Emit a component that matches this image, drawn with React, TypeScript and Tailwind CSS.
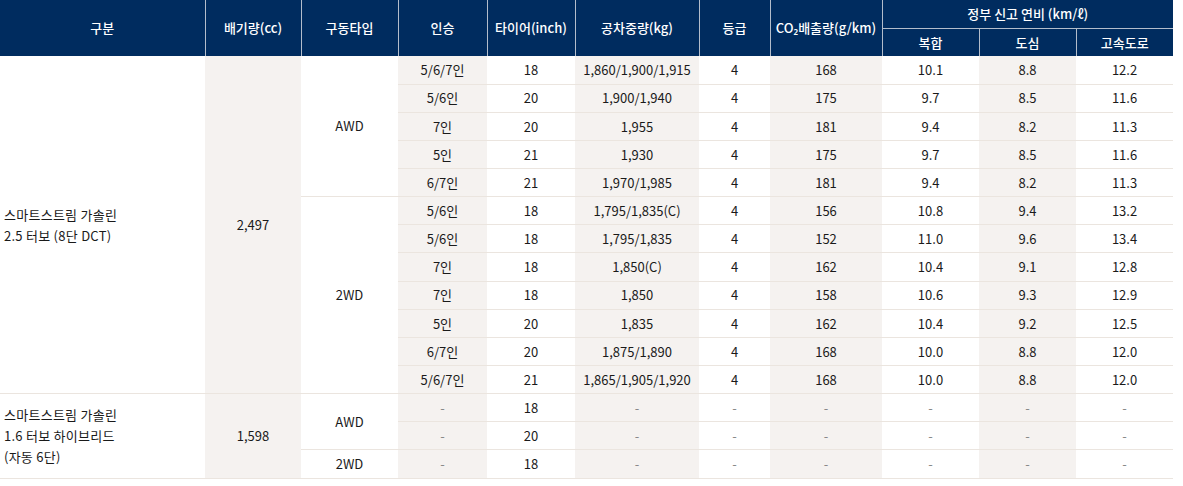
import React from 'react';

interface SpecRow {
  seat: string;
  tire: string;
  weight: string;
  grade: string;
  co2: string;
  comb: string;
  city: string;
  hwy: string;
}

interface DriveGroup {
  type: string;
  rows: SpecRow[];
}

interface EngineGroup {
  name: string[];
  cc: string;
  drives: DriveGroup[];
}

const r = (seat: string, tire: string, weight: string, grade: string, co2: string, comb: string, city: string, hwy: string): SpecRow => ({
  seat, tire, weight, grade, co2, comb, city, hwy,
});

const dash = (tire: string) => r('-', tire, '-', '-', '-', '-', '-', '-');

const groups: EngineGroup[] = [
  {
    name: ['스마트스트림 가솔린', '2.5 터보 (8단 DCT)'],
    cc: '2,497',
    drives: [
      {
        type: 'AWD',
        rows: [
          r('5/6/7인', '18', '1,860/1,900/1,915', '4', '168', '10.1', '8.8', '12.2'),
          r('5/6인', '20', '1,900/1,940', '4', '175', '9.7', '8.5', '11.6'),
          r('7인', '20', '1,955', '4', '181', '9.4', '8.2', '11.3'),
          r('5인', '21', '1,930', '4', '175', '9.7', '8.5', '11.6'),
          r('6/7인', '21', '1,970/1,985', '4', '181', '9.4', '8.2', '11.3'),
        ],
      },
      {
        type: '2WD',
        rows: [
          r('5/6인', '18', '1,795/1,835(C)', '4', '156', '10.8', '9.4', '13.2'),
          r('5/6인', '18', '1,795/1,835', '4', '152', '11.0', '9.6', '13.4'),
          r('7인', '18', '1,850(C)', '4', '162', '10.4', '9.1', '12.8'),
          r('7인', '18', '1,850', '4', '158', '10.6', '9.3', '12.9'),
          r('5인', '20', '1,835', '4', '162', '10.4', '9.2', '12.5'),
          r('6/7인', '20', '1,875/1,890', '4', '168', '10.0', '8.8', '12.0'),
          r('5/6/7인', '21', '1,865/1,905/1,920', '4', '168', '10.0', '8.8', '12.0'),
        ],
      },
    ],
  },
  {
    name: ['스마트스트림 가솔린', '1.6 터보 하이브리드', '(자동 6단)'],
    cc: '1,598',
    drives: [
      { type: 'AWD', rows: [dash('18'), dash('20')] },
      { type: '2WD', rows: [dash('18')] },
    ],
  },
];

const shade = 'bg-[#f5f2f0]';
const th = 'border-x border-[#b3bdcb] font-medium text-white text-[13px] text-center align-middle';
const td = 'border-b border-[#ebe5df] text-center align-middle text-[13px]';

const Cell: React.FC<{ value: string; shaded?: boolean }> = ({ value, shaded }) => (
  <td className={`${td} ${shaded ? shade : ''} ${value === '-' ? 'text-[#888]' : 'text-[#1a1a1a]'}`}>{value}</td>
);

export default function App() {
  return (
    <div className="w-[1183px] bg-white" style={{ fontFamily: '"Noto Sans CJK KR", "Noto Sans", sans-serif' }}>
      <table className="w-[1173px] table-fixed border-collapse">
        <colgroup>
          <col className="w-[205px]" />
          <col className="w-[96px]" />
          <col className="w-[97px]" />
          <col className="w-[89px]" />
          <col className="w-[88px]" />
          <col className="w-[124px]" />
          <col className="w-[71px]" />
          <col className="w-[112px]" />
          <col className="w-[97px]" />
          <col className="w-[97px]" />
          <col className="w-[97px]" />
        </colgroup>
        <thead className="bg-[#002c5f]">
          <tr className="h-[28px]">
            <th rowSpan={2} className={`${th} border-l-0`}>구분</th>
            <th rowSpan={2} className={th}>배기량(cc)</th>
            <th rowSpan={2} className={th}>구동타입</th>
            <th rowSpan={2} className={th}>인승</th>
            <th rowSpan={2} className={th}>타이어(inch)</th>
            <th rowSpan={2} className={th}>공차중량(kg)</th>
            <th rowSpan={2} className={th}>등급</th>
            <th rowSpan={2} className={th}>CO₂배출량(g/km)</th>
            <th colSpan={3} className={`${th} border-b border-r-0`}>정부 신고 연비 (km/ℓ)</th>
          </tr>
          <tr className="h-[28px]">
            <th className={th}>복합</th>
            <th className={th}>도심</th>
            <th className={`${th} border-r-0`}>고속도로</th>
          </tr>
        </thead>
        <tbody>
          {groups.map((g) => {
            const total = g.drives.reduce((n, d) => n + d.rows.length, 0);
            return g.drives.map((d, di) =>
              d.rows.map((row, ri) => (
                <tr key={`${g.cc}-${di}-${ri}`} className="h-[28.15px]">
                  {di === 0 && ri === 0 && (
                    <>
                      <td rowSpan={total} className={`${td} text-left pl-[4px] text-[#1a1a1a] leading-[21px] tracking-[0.02em]`}>
                        {g.name.map((line) => (
                          <div key={line}>{line}</div>
                        ))}
                      </td>
                      <td rowSpan={total} className={`${td} ${shade} text-[#1a1a1a]`}>{g.cc}</td>
                    </>
                  )}
                  {ri === 0 && (
                    <td rowSpan={d.rows.length} className={`${td} text-[#1a1a1a]`}>{d.type}</td>
                  )}
                  <Cell value={row.seat} shaded />
                  <Cell value={row.tire} />
                  <Cell value={row.weight} shaded />
                  <Cell value={row.grade} />
                  <Cell value={row.co2} shaded />
                  <Cell value={row.comb} />
                  <Cell value={row.city} shaded />
                  <Cell value={row.hwy} />
                </tr>
              ))
            );
          })}
        </tbody>
      </table>
    </div>
  );
}
